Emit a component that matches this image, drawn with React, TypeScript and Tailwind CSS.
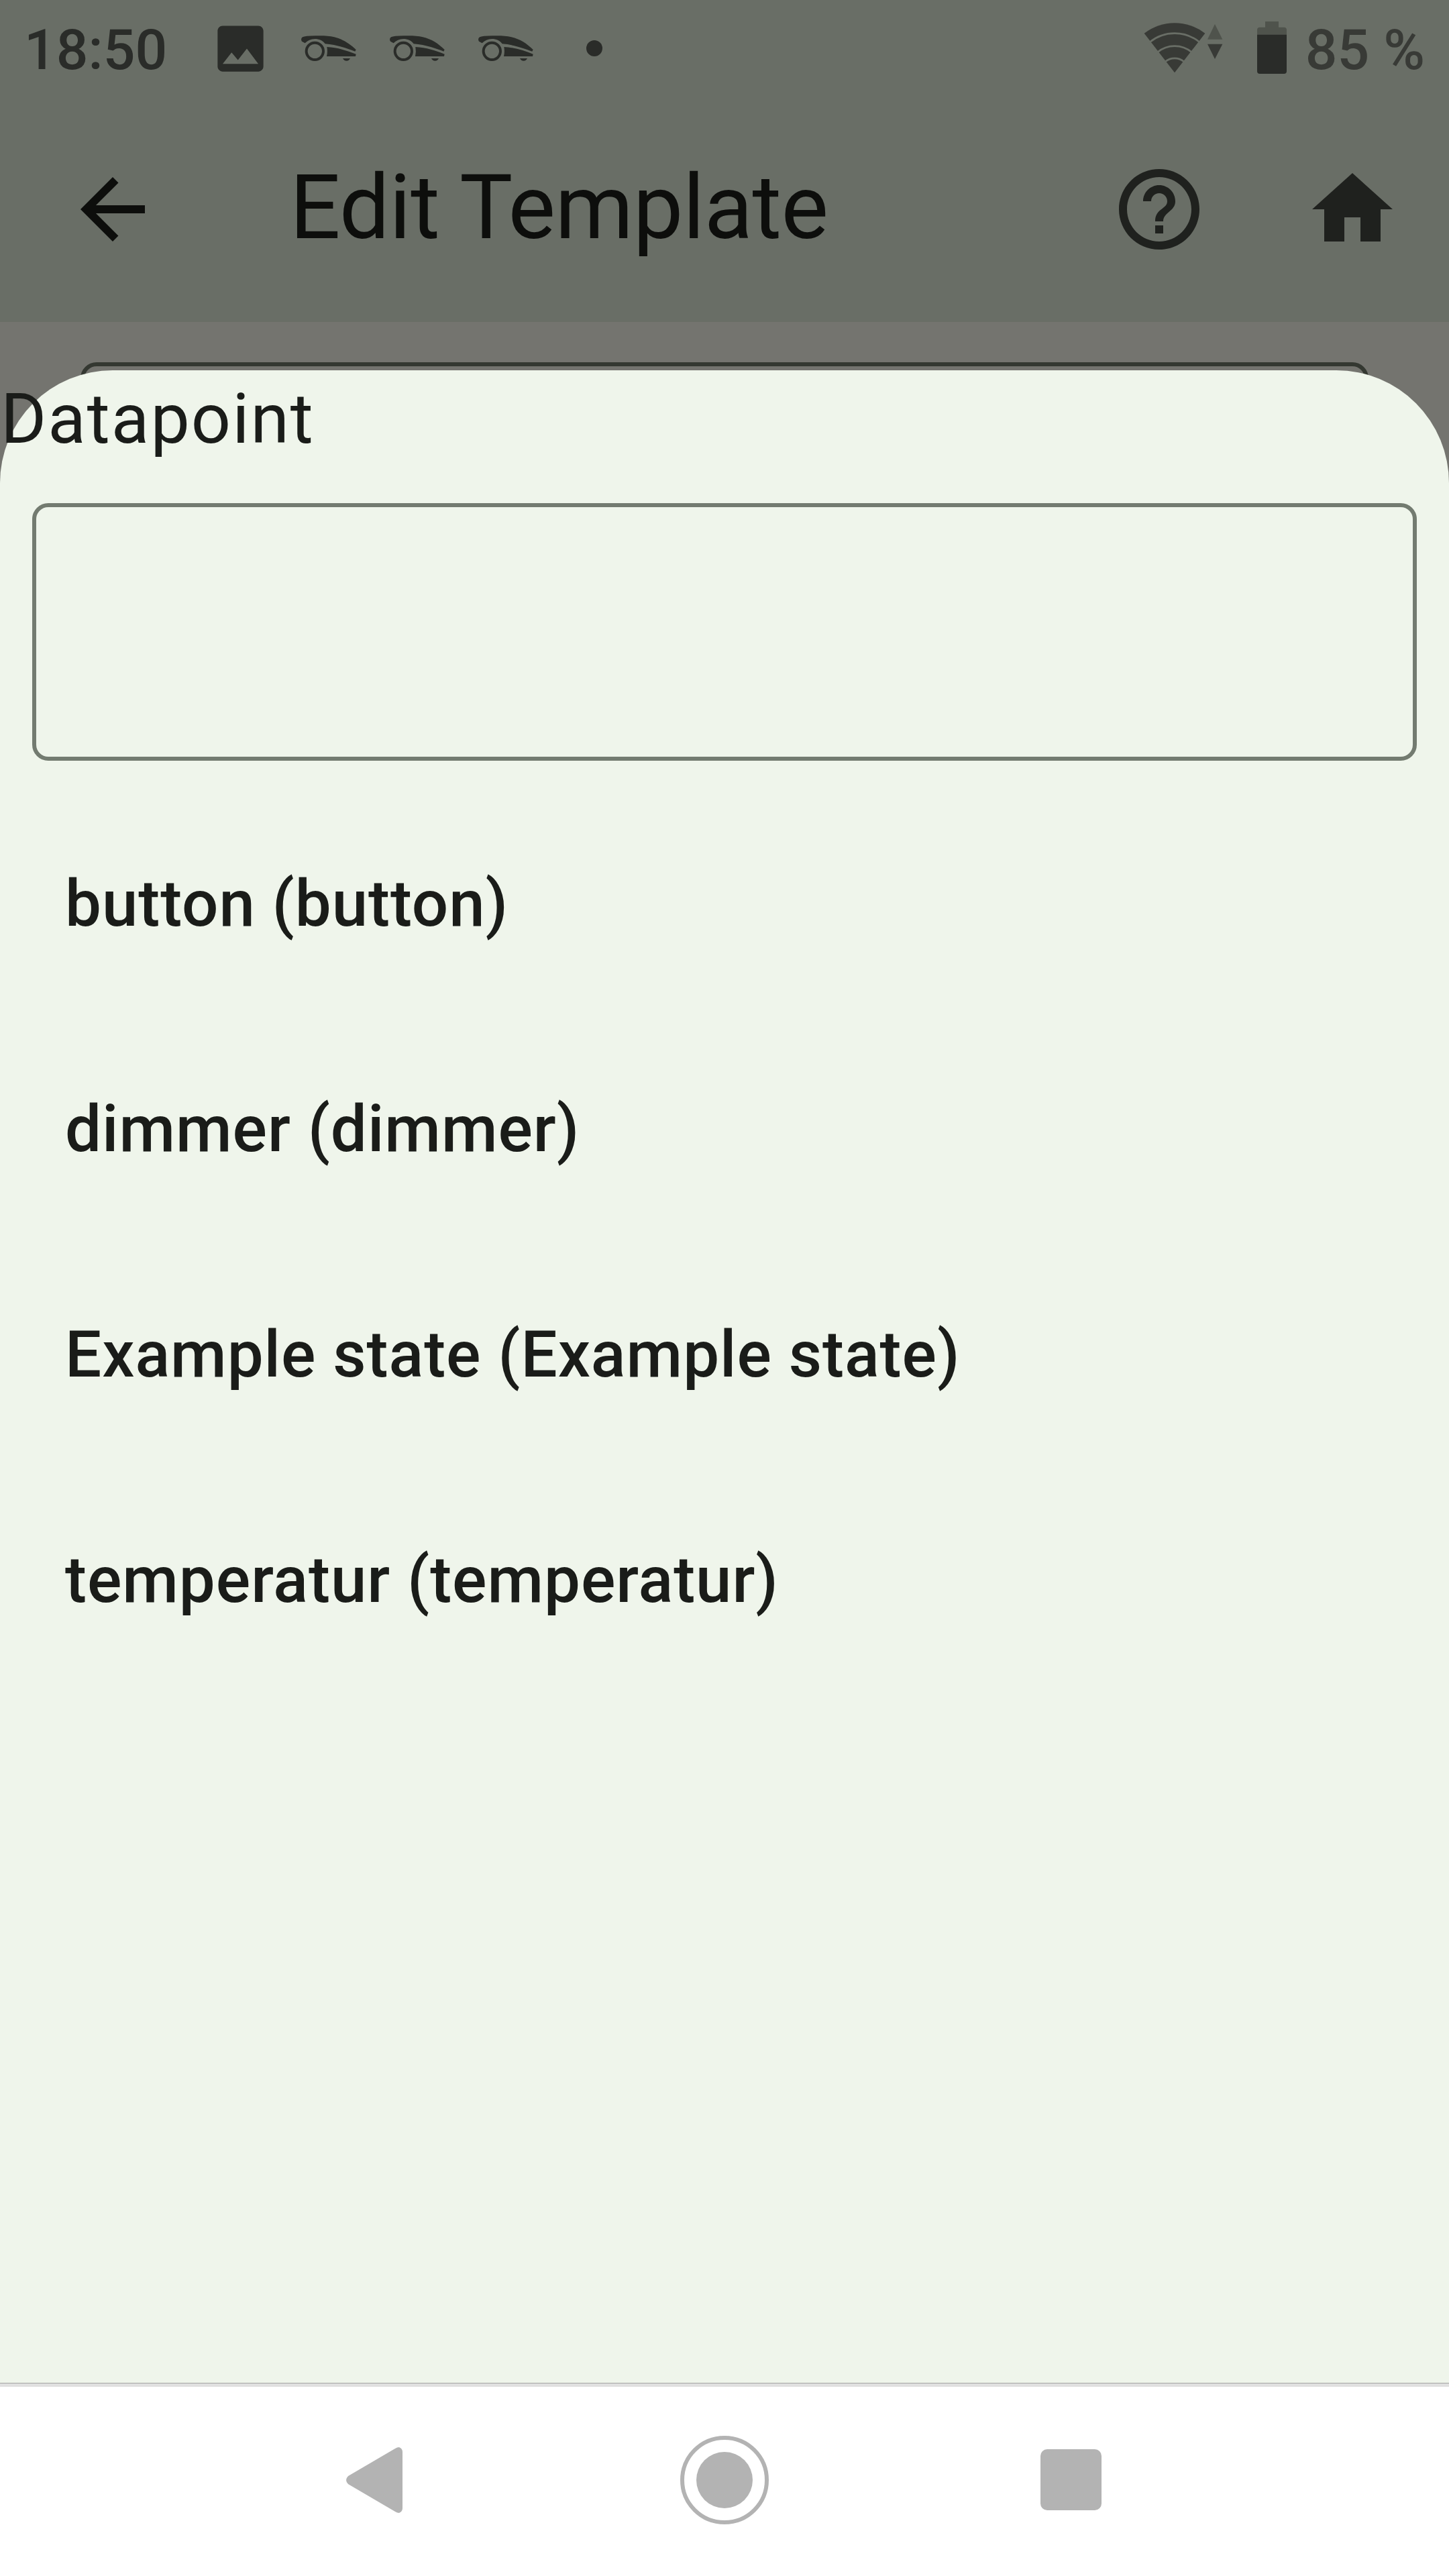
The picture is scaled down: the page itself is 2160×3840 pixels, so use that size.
import { MdArrowBack, MdHelpOutline, MdHome, MdImage } from "react-icons/md";

const datapoints = [
  "button (button)",
  "dimmer (dimmer)",
  "Example state (Example state)",
  "temperatur (temperatur)",
];

function MowerIcon() {
  return (
    <svg viewBox="85 155 252 120" className="h-[40px] w-[84px]" fill="currentColor">
      <circle cx="149" cy="228" r="38" fill="none" stroke="currentColor" strokeWidth="12" />
      <path d="M105 192L91 184Q84 172 94 165Q105 159 150 159C185 158 212 159 236 165C275 174 305 194 333 221L329 229C300 218 250 199 195 195C184 180 168 173 149 173Q122 174 105 192Z" />
      <path d="M203 209C250 211 295 226 333 241L331 251H202Q207 230 203 209Z" />
      <path d="M274 260H307Q302 271 291 271Q279 271 274 260Z" />
    </svg>
  );
}

function WifiIcon() {
  return (
    <svg viewBox="75 96 354 232" className="h-[77.33px] w-[118px]">
      <path d="M213 325L77 149A222 222 0 0 1 349 149Z" fill="#383a36" />
      <g fill="none" stroke="#696e66" strokeWidth="8">
        <path d="M101 189A176 176 0 0 1 325 189" />
        <path d="M136 234A120 120 0 0 1 290 234" />
        <path d="M171 276A65 65 0 0 1 255 276" />
      </g>
      <path d="M393 108L360 176H427Z" fill="#4f534c" />
      <path d="M360 197H427L393 264Z" fill="#383a36" />
    </svg>
  );
}

function BatteryIcon() {
  return (
    <svg viewBox="582 96 132 234" className="h-[78px] w-[44px]">
      <path d="M618 96H678V122H702Q714 122 714 134V156H582V134Q582 122 594 122H618Z" fill="#4f534c" />
      <path d="M582 155H714V318Q714 330 702 330H594Q582 330 582 318Z" fill="#2a2c29" />
    </svg>
  );
}

function StatusBar() {
  return (
    <div className="flex h-36 items-start text-[84px] leading-[150px] font-medium text-[#2a2c29]">
      <span className="ml-9 w-[213px]">18:50</span>
      <MdImage className="mt-[27px] ml-[64px] size-[91px]" />
      <div className="mt-[51.67px] ml-[44.33px] flex gap-12">
        <MowerIcon />
        <MowerIcon />
        <MowerIcon />
      </div>
      <span className="mt-[60px] ml-[77.67px] size-6 rounded-full bg-current" />
      <div className="mt-8 ml-auto flex gap-[51px]">
        <WifiIcon />
        <BatteryIcon />
      </div>
      <span className="mr-9 ml-[28px] whitespace-nowrap text-[#383a36]">85 %</span>
    </div>
  );
}

function AppBar() {
  return (
    <header className="flex h-[336px] items-center pr-[72px] pl-24 text-[#1f211e]">
      <MdArrowBack className="size-36 text-[#0d0e0c]" />
      <h1 className="relative -top-[3px] ml-48 flex-1 text-[133px] leading-none tracking-[-0.5px] text-[#0d0e0c]">
        Edit Template
      </h1>
      <MdHelpOutline className="size-36" />
      <MdHome className="ml-36 size-36" />
    </header>
  );
}

function DatapointSheet() {
  return (
    <section className="absolute inset-x-0 top-[552px] bottom-72 flex flex-col rounded-t-[168px] bg-[#eff5eb] text-[#1a1c19]">
      <h2 className="pl-px text-[104px] leading-[146px] tracking-[2px]">Datapoint</h2>
      <input className="mx-12 mt-[52px] h-96 rounded-3xl border-6 border-[#737b70] bg-transparent px-12 text-[96px] outline-none" />
      <ul className="mt-[45px]">
        {datapoints.map((name) => (
          <li key={name} className="flex h-[336px] items-center px-[97px] text-[96px] leading-none font-medium tracking-[0.95px]">
            {name}
          </li>
        ))}
      </ul>
    </section>
  );
}

function NavigationBar() {
  return (
    <nav className="flex h-72 items-center border-t border-[#a3a3a3] bg-white text-[#b3b3b3] shadow-[inset_0_5px_0_#e0e0e0]">
      <svg viewBox="0 0 84 98" className="ml-[516px] h-[98px] w-[84px]" fill="currentColor">
        <path d="M3 43L73 2Q76 0 79 0Q84 2 84 7V91Q84 96 79 98Q76 98 73 96L3 55Q-3 49 3 43Z" />
      </svg>
      <div className="ml-[414px] flex size-[132px] items-center justify-center rounded-full border-6 border-current">
        <div className="size-[84px] rounded-full bg-current" />
      </div>
      <div className="ml-[404.5px] size-[91px] rounded-[10px] bg-current" />
    </nav>
  );
}

export default function App() {
  return (
    <div className="relative flex h-[3840px] w-[2160px] flex-col overflow-hidden bg-[#74746f] font-['Roboto',sans-serif]">
      <div className="bg-[#696e66]">
        <StatusBar />
        <AppBar />
      </div>
      <main className="flex-1 px-[120px] pt-[60px]">
        <div className="h-96 rounded-3xl border-6 border-[#343831]" />
      </main>
      <DatapointSheet />
      <NavigationBar />
    </div>
  );
}
